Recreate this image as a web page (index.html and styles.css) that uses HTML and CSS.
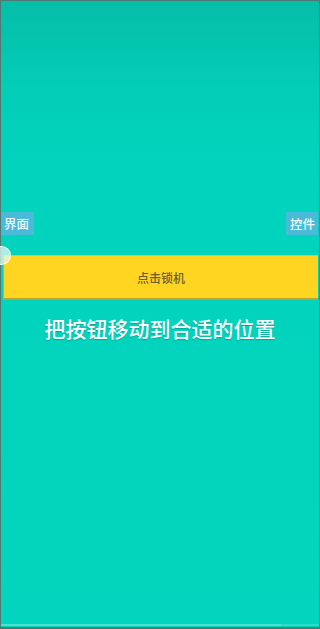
FILE: index.html
```html
<!DOCTYPE html>
<html lang="zh">
<head>
<meta charset="utf-8">
<link rel="stylesheet" href="styles.css">
</head>
<body>
<div class="screen">
  <div class="labels">
    <span class="tag">界面</span>
    <span class="tag">控件</span>
  </div>
  <div class="bar">
    <span class="knob"></span>
    <span class="bar-text">点击锁机</span>
  </div>
  <div class="hint">把按钮移动到合适的位置</div>
  <div class="bottom">
    <div class="bottom-fill"></div>
  </div>
</div>
</body>
</html>
```
FILE: styles.css
```css
html, body {
  margin: 0;
  padding: 0;
}
body {
  width: 320px;
  height: 629px;
  font-family: "Noto Sans CJK SC", "Noto Sans", sans-serif;
}
.screen {
  box-sizing: border-box;
  width: 320px;
  height: 629px;
  border: 1px solid #4f7a74;
  border-bottom-width: 2px;
  background: linear-gradient(to bottom, #05bea8 0px, #03ceb7 90px, #02d3bc 160px, #02d5bd 100%);
  display: flex;
  flex-direction: column;
}
.labels {
  margin-top: 211px;
  display: flex;
  justify-content: space-between;
  padding-right: 1px;
}
.tag {
  height: 23px;
  line-height: 23px;
  padding: 0 5px 0 3px;
  font-size: 12.5px;
  font-weight: 500;
  color: #eef8fb;
  background: rgba(125, 170, 235, 0.6);
}
.tag + .tag {
  padding: 0 3px 0 4px;
}
.bar {
  position: relative;
  margin: 20px 1px 0 2px;
  height: 42px;
  background: #ffd521;
  border-top: 1px solid #c9cf33;
  border-left: 1px solid #c2b43a;
  border-bottom: 2px solid #bba52a;
  display: flex;
  align-items: center;
  justify-content: center;
}
.bar-text {
  font-size: 12px;
  font-weight: 500;
  color: #6a5e2e;
}
.knob {
  position: absolute;
  left: -12px;
  top: -10px;
  width: 17px;
  height: 17px;
  border-radius: 50%;
  background: rgba(225, 245, 240, 0.75);
  border: 1px solid rgba(255, 255, 240, 0.9);
}
.hint {
  margin-top: 13px;
  text-align: center;
  font-size: 21px;
  font-weight: 500;
  color: #ffffff;
  text-shadow: 0 1px 1px rgba(0, 90, 80, 0.35);
}
.bottom {
  margin-top: auto;
  margin-bottom: 1px;
  height: 2px;
  background: #2ddcc8;
}
.bottom-fill {
  width: 280px;
  height: 2px;
  background: #4fe0cf;
}
```
